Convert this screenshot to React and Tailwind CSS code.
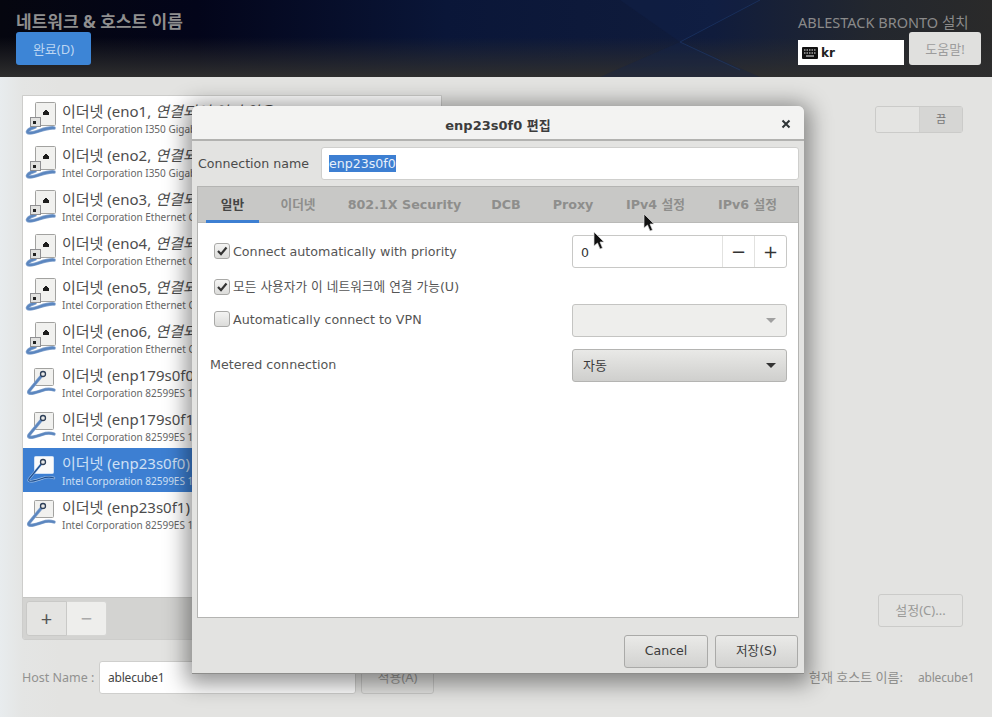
const dejavu = "font-['DejaVu_Sans','Noto_Sans_CJK_KR',sans-serif]";
const noto = "font-['Noto_Sans','Noto_Sans_CJK_KR',sans-serif]";

const rows = [
    { name: 'eno1', off: true, sub: 'Intel Corporation I350 Gigabit Network Connection' },
    { name: 'eno2', off: true, sub: 'Intel Corporation I350 Gigabit Network Connection' },
    { name: 'eno3', off: true, sub: 'Intel Corporation Ethernet Connection X722' },
    { name: 'eno4', off: true, sub: 'Intel Corporation Ethernet Connection X722' },
    { name: 'eno5', off: true, sub: 'Intel Corporation Ethernet Connection X722' },
    { name: 'eno6', off: true, sub: 'Intel Corporation Ethernet Connection X722' },
    { name: 'enp179s0f0', sub: 'Intel Corporation 82599ES 10-Gigabit SFI/SFP+' },
    { name: 'enp179s0f1', sub: 'Intel Corporation 82599ES 10-Gigabit SFI/SFP+' },
    { name: 'enp23s0f0', selected: true, sub: 'Intel Corporation 82599ES 10-Gigabit SFI/SFP+' },
    { name: 'enp23s0f1', sub: 'Intel Corporation 82599ES 10-Gigabit SFI/SFP+' },
];

const tabs = [
    { label: '일반', w: 'w-[53px]', active: true },
    { label: '이더넷', w: 'w-[38px] ml-[20px]' },
    { label: '802.1X Security', w: 'w-[113px] ml-[31px]' },
    { label: 'DCB', w: 'w-[30px] ml-[30px]' },
    { label: 'Proxy', w: 'w-[40px] ml-[32px]' },
    { label: 'IPv4 설정', w: 'w-[61px] ml-[32px]' },
    { label: 'IPv6 설정', w: 'w-[61px] ml-[31px]' },
];

function NetIcon({ plugged, selected }) {
    const cable = selected ? '#1f4f8f' : '#5b86bf';
    const edge = selected ? '#9fc0e8' : '#86a5cf';
    return (
        <svg width="32" height="36" viewBox="0 0 32 36" className="shrink-0">
            {plugged ? (
                <>
                    <rect x="10.500" y="2.500" width="20" height="23" rx="1" fill="#f1f1ef" stroke="#a2a2a0" />
                    <path d="M19 11h1v-1h2v1h1v1h1v3h-6v-3h1z" fill="#1c1c1c" />
                    <path d="M10 27C3 29 0 33 5 33C12 33 20 27 29 28" fill="none" stroke={edge} strokeWidth="3.600" strokeLinecap="round" />
                    <path d="M10 27C3 29 0 33 5 33C12 33 20 27 29 28" fill="none" stroke={cable} strokeWidth="2.200" strokeLinecap="round" />
                    <rect x="5.500" y="17.500" width="10" height="9" fill="#e2e2e0" stroke="#8f8f92" />
                    <rect x="8" y="21" width="3" height="3" fill="#222" />
                </>
            ) : (
                <>
                    <rect x="9.500" y="4.500" width="19" height="17" rx="1" fill={selected ? '#fafafa' : '#f1f1ef'} stroke={selected ? '#cfe0f5' : '#a2a2a0'} />
                    <path d="M18 10L4 27C2 31 10 29 17 26.500C21 25 26 25 29 26" fill="none" stroke={edge} strokeWidth={selected ? 2.400 : 3.400} strokeLinecap="round" strokeLinejoin="round" />
                    <path d="M18 10L4 27C2 31 10 29 17 26.500C21 25 26 25 29 26" fill="none" stroke={cable} strokeWidth={selected ? 1.200 : 2} strokeLinecap="round" strokeLinejoin="round" />
                    <circle cx="18" cy="10" r="2.500" fill="#e8e8e6" stroke="#2d3f58" strokeWidth="1.300" />
                </>
            )}
        </svg>
    );
}

function Row({ row }) {
    return (
        <div className={`flex h-[44px] items-start overflow-visible pl-[2px] pt-[4px] whitespace-nowrap ${row.selected ? 'bg-[#3d7fd2]' : ''}`}>
            <NetIcon plugged={row.off} selected={row.selected} />
            <div className={`ml-[5px] ${noto}`}>
                <div className={`h-[22px] text-[15px] leading-[23px] ${row.selected ? 'text-[#cfe0f5]' : 'text-[#4d4d4d]'}`}>
                    이더넷 ({row.name}{row.off ? <>, <span className="italic">연결되어 있지 않음)</span></> : ')'}
                </div>
                <div className={`text-[10px] leading-[14px] ${row.selected ? 'text-[#cfe0f5]' : 'text-[#666666]'}`}>{row.sub}</div>
            </div>
        </div>
    );
}

function Checkbox({ checked }) {
    return (
        <span className="flex h-[16px] w-[16px] shrink-0 items-center justify-center rounded-[3px] border border-[#a9a9a7] bg-gradient-to-b from-[#f4f4f3] to-[#dcdcda]">
            {checked && (
                <svg width="12" height="12" viewBox="0 0 12 12">
                    <path d="M2 6l3 3.200L10.500 2.500" fill="none" stroke="#333" strokeWidth="2.200" />
                </svg>
            )}
        </span>
    );
}

function Caret({ dim }) {
    return <span className={`h-0 w-0 border-x-[5px] border-t-[5px] border-x-transparent ${dim ? 'border-t-[#a0a0a0]' : 'border-t-[#333333]'}`} />;
}

function Cursor({ className }) {
    return (
        <svg width="14" height="20" viewBox="0 0 14 20" className={`absolute ${className}`}>
            <path d="M1 1v14l3.500-3 2.500 6 2.500-1-2.500-6H11z" fill="#111" stroke="#ddd" strokeWidth="0.700" />
        </svg>
    );
}

function Dialog() {
    return (
        <div className={`absolute left-[192px] top-[106px] flex h-[568px] w-[612px] flex-col rounded-t-[6px] border-b border-[#8d8d8b] bg-[#e3e3e1] shadow-[0_4px_22px_6px_rgba(0,0,0,0.42)] ${dejavu}`}>
            <div className="relative flex h-[35px] items-center justify-center rounded-t-[6px] border-b-2 border-[#b2b2b0] bg-[#f3f3f2] pt-[7px]">
                <span className="text-[13px] font-bold text-[#3c3c3c]">enp23s0f0 편집</span>
                <svg width="10" height="10" viewBox="0 0 10 10" className="absolute right-[13px] top-[13px]">
                    <path d="M1.500 1.500l7 7M8.500 1.500l-7 7" stroke="#2e3436" strokeWidth="2" />
                </svg>
            </div>
            <div className="flex h-[45px] items-center pl-[6px] pr-[5px]">
                <span className="w-[123px] pt-[1px] text-[12.600px] text-[#4b4b4b]">Connection name</span>
                <div className="flex h-[33px] flex-1 items-center rounded-[3px] border border-[#cfcfcd] bg-white pl-[7px] text-[12.600px] text-[#e8f0fa]">
                    <span className="bg-[#3d7fd2] leading-[17px]">enp23s0f0</span>
                </div>
            </div>
            <div className="mx-[5px] flex h-[432px] flex-col border border-[#b4b4b2] bg-white">
                <div className="flex h-[36px] border-b border-[#b9b9b7] bg-[#c8c8c6] pl-[8px]">
                    {tabs.map((tab) => (
                        <div
                            key={tab.label}
                            className={`flex h-[36px] items-center justify-center whitespace-nowrap text-[12.700px] font-bold ${tab.w} ${tab.active ? 'border-b-[3px] border-[#3d7fd2] pt-[3px] text-[#454545]' : 'text-[#8e8e8c]'}`}
                        >
                            {tab.label}
                        </div>
                    ))}
                </div>
                <div className="flex flex-col pl-[12px] pr-[11px] text-[12.700px] text-[#555555]">
                    <div className="mt-[12px] flex h-[33px] items-center">
                        <div className="ml-[4px] flex flex-1 items-center gap-[3px]">
                            <Checkbox checked />
                            <span>Connect automatically with priority</span>
                        </div>
                        <div className="flex h-[33px] w-[215px] items-center rounded-[3px] border border-[#c8c8c6] bg-white text-[#333333]">
                            <span className="flex-1 pl-[8px] pt-[3px] text-[12.500px]">0</span>
                            <span className="flex h-full w-[32px] items-center justify-center border-l border-[#e2e2e0] text-[18px] leading-none">−</span>
                            <span className="flex h-full w-[32px] items-center justify-center border-l border-[#e2e2e0] text-[18px] leading-none">+</span>
                        </div>
                    </div>
                    <div className="ml-[4px] mt-[10px] flex h-[18px] items-center gap-[3px]">
                        <Checkbox checked />
                        <span>모든 사용자가 이 네트워크에 연결 가능(U)</span>
                    </div>
                    <div className="mt-[8px] flex h-[33px] items-center">
                        <div className="ml-[4px] flex flex-1 items-center gap-[3px] pb-[2px]">
                            <Checkbox />
                            <span>Automatically connect to VPN</span>
                        </div>
                        <div className="flex h-[33px] w-[215px] items-center justify-end rounded-[3px] border border-[#c4c4c2] bg-[#eeeeec] pr-[10px]">
                            <Caret dim />
                        </div>
                    </div>
                    <div className="mt-[12px] flex h-[33px] items-center">
                        <span className="flex-1 pb-[2px]">Metered connection</span>
                        <div className={`flex h-[33px] w-[215px] items-center justify-between rounded-[3px] border border-[#b4b4b2] bg-gradient-to-b from-[#e9e9e7] to-[#cfcfcd] pl-[10px] pr-[10px] ${noto}`}>
                            <span className="text-[13px] text-[#3c3c3c]">자동</span>
                            <Caret />
                        </div>
                    </div>
                </div>
            </div>
            <div className="mr-[6px] mt-[17px] flex justify-end gap-[7px] text-[12.600px] text-[#3c3c3c]">
                <div className="flex h-[33px] w-[84px] items-center justify-center rounded-[3px] border border-[#aaaaa8] bg-gradient-to-b from-[#eaeae8] to-[#d2d2d0]">Cancel</div>
                <div className="flex h-[33px] w-[83px] items-center justify-center rounded-[3px] border border-[#aaaaa8] bg-gradient-to-b from-[#eaeae8] to-[#d2d2d0]">저장(S)</div>
            </div>
        </div>
    );
}

export default function App() {
    return (
        <div className={`relative flex h-[717px] w-[992px] flex-col overflow-hidden bg-[linear-gradient(90deg,#e8ecee_0px,#e4e5e4_22px,#e3e3e1_60px)] ${noto}`}>
            <header className="relative flex h-[77px] shrink-0 justify-between overflow-hidden bg-[linear-gradient(90deg,#05060f_0%,#03051a_20%,#0a1638_45%,#101c3c_72%,#23272e_88%,#2a2a2a_100%)] pl-[16px] pr-[11px]">
                <div className="absolute inset-x-0 bottom-0 h-[40px] bg-gradient-to-b from-transparent to-[#2e2e2e]" />
                <svg width="992" height="77" viewBox="0 0 992 77" className="absolute left-0 top-0 opacity-60">
                    <path d="M680 42L760 0H620zM680 42L760 77H600z" fill="#12244f" opacity="0.500" />
                    <path d="M680 42L760 0M680 42L740 70" stroke="#1d3a70" fill="none" />
                </svg>
                <div className="relative">
                    <div className="mt-[11px] h-[21px] text-[17px] font-bold leading-[21px] text-[#8f8f8f]">네트워크 &amp; 호스트 이름</div>
                    <div className="flex h-[33px] w-[75px] items-center justify-center rounded-[3px] bg-[#3d85d6] pt-[2px] text-[13px] text-[#bcd6f2]">완료(D)</div>
                </div>
                <div className="relative flex flex-col items-end">
                    <div className="mt-[12px] h-[20px] w-[183px] whitespace-nowrap text-[14.500px] leading-[20px] text-[#8a8a8a]">ABLESTACK BRONTO 설치</div>
                    <div className="flex items-end gap-[5px]">
                        <div className={`flex h-[25px] w-[106px] items-center gap-[3px] bg-white pl-[4px] text-[12px] font-bold text-[#222222] ${dejavu}`}>
                            <svg width="16" height="12" viewBox="0 0 16 12">
                                <rect width="16" height="12" rx="1" fill="#111" />
                                <path d="M2 3h12M2 6h12" stroke="#eee" strokeDasharray="1.500 1" />
                                <path d="M4 9h8" stroke="#eee" />
                            </svg>
                            kr
                        </div>
                        <div className="flex h-[33px] w-[72px] items-center justify-center rounded-[3px] bg-[#e0e0de] pt-[2px] text-[13px] text-[#9c9c9c]">도움말!</div>
                    </div>
                </div>
            </header>

            <main className="flex flex-1 flex-col pl-[22px] pr-[17px] pt-[18px]">
                <div className="flex h-[545px]">
                    <div className="flex w-[420px] flex-col overflow-hidden rounded-b-[3px] border border-[#cdcdcb]">
                        <div className="h-[501px] overflow-hidden bg-white">
                            {rows.map((row) => (
                                <Row key={row.name} row={row} />
                            ))}
                        </div>
                        <div className="flex flex-1 items-center border-t border-[#c6c6c4] bg-[#d3d3d1] pl-[3px]">
                            <div className="flex h-[35px] w-[41px] items-center justify-center rounded-l-[3px] border border-[#c9c9c7] bg-[#e4e4e2] text-[20px] text-[#555555]">+</div>
                            <div className="flex h-[35px] w-[40px] items-center justify-center rounded-r-[3px] border border-l-0 border-[#d5d5d3] bg-[#eeeeec] text-[20px] text-[#aaaaaa]">−</div>
                        </div>
                    </div>
                    <div className="mr-[12px] flex flex-1 flex-col items-end pb-[13px] pt-[11px] text-[13px]">
                        <div className="flex h-[27px] w-[88px] rounded-[3px] border border-[#cbcbc9]">
                            <span className="w-[43px] rounded-l-[3px] bg-[#e4e4e2]" />
                            <span className="flex flex-1 items-center justify-center border-l border-[#d0d0ce] bg-[#d6d6d4] text-[11px] text-[#777777]">끔</span>
                        </div>
                        <div className="mt-auto flex h-[33px] w-[85px] items-center justify-center rounded-[3px] border border-[#cbcbc9] pt-[1px] text-[#9a9a98]">설정(C)...</div>
                    </div>
                </div>
                <div className="mt-[21px] flex h-[33px] items-center text-[13px]">
                    <span className="w-[77px] pt-[1px] text-[12.500px] text-[#929290]">Host Name :</span>
                    <div className="flex h-[33px] w-[257px] items-center rounded-[3px] border border-[#cfcfcd] bg-white pl-[8px] pt-[1px] text-[12px] tracking-[-0.2px] text-[#444444]">ablecube1</div>
                    <div className="ml-[5px] flex h-[33px] w-[73px] items-center justify-center rounded-[3px] border border-[#c9c9c7] text-[#9a9a98]">적용(A)</div>
                    <span className="ml-auto pl-[1px] text-[#8f8f8d]">현재 호스트 이름:</span>
                    <span className="ml-[15px] w-[57px] text-[12px] tracking-[-0.2px] text-[#8f8f8d]">ablecube1</span>
                </div>
            </main>

            <Dialog />
            <Cursor className="left-[593px] top-[231px]" />
            <Cursor className="left-[643px] top-[213px]" />
        </div>
    );
}
